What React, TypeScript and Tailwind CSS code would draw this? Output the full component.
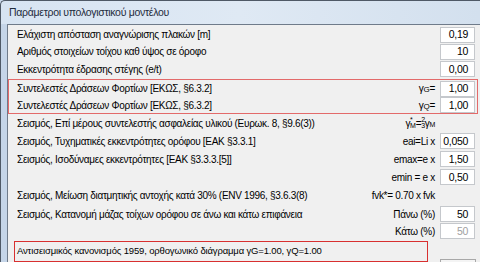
import React from "react";

const font = { fontFamily: '"Liberation Sans", "DejaVu Sans", sans-serif' };

function Box({ v, disabled }: { v: string; disabled?: boolean }) {
  return (
    <div
      className={
        disabled
          ? "w-[35px] h-[16px] bg-white border border-[#c5c8cc] flex items-center justify-end pr-[6px] text-[10.5px] leading-none text-[#a0a0a0]"
          : "w-[35px] h-[16px] bg-white border border-[#c5c8cc] flex items-center justify-end pr-[6px] text-[10.5px] leading-none text-black"
      }
    >
      {v}
    </div>
  );
}

function Row({
  label,
  right,
  v,
  tall,
  disabled,
}: {
  label?: React.ReactNode;
  right?: React.ReactNode;
  v?: string;
  tall: number;
  disabled?: boolean;
}) {
  return (
    <div className="grid grid-cols-[minmax(0,1fr)_auto_35px] items-center" style={{ height: tall }}>
      <div className="whitespace-nowrap overflow-hidden">{label}</div>
      <div className="whitespace-nowrap pr-[5px]">{right}</div>
      <div>{v !== undefined && <Box v={v} disabled={disabled} />}</div>
    </div>
  );
}

export default function App() {
  return (
    <div
      className="w-[480px] h-[262px] overflow-hidden bg-[#c9d8ea] text-[10px] tracking-[-0.3px] text-black relative"
      style={font}
    >
      {/* title bar */}
      <div className="h-[24px] border-t border-l border-[#4f5966] rounded-tl-[5px] bg-gradient-to-r from-[#d7e4f2] via-[#dfe9f4] to-[#d3e0ee] flex items-center pl-[8px] text-[10.5px] tracking-[-0.3px] text-[#1e2b3c]">
        Παράμετροι υπολογιστικού μοντέλου
      </div>
      <div className="grid grid-cols-[7px_minmax(0,1fr)] h-[238px]">
        <div className="bg-[#c5d5e8] border-l border-[#4f5966]" />
        <div className="bg-[#f0f0f0] border-l border-t border-[#6f7b8a] pl-[9px] pr-[5px] pt-[1px]">
          <Row tall={17} label="Ελάχιστη απόσταση αναγνώρισης πλακών [m]" v="0,19" />
          <Row tall={17} label="Αριθμός  στοιχείων τοίχου καθ ύψος σε όροφο" v="10" />
          <Row tall={18} label="Εκκεντρότητα έδρασης στέγης (e/t)" v="0,00" />
          <div className="ml-[-9px] mr-[-3px] mt-[1px] border border-[#e36a6a] pl-[8px] pr-[2px]">
            <Row
              tall={17}
              label="Συντελεστές Δράσεων Φορτίων [ΕΚΩΣ, §6.3.2]"
              right={<span>γ<span className="text-[8px]">G</span>=</span>}
              v="1,00"
            />
            <Row
              tall={16}
              label="Συντελεστές Δράσεων Φορτίων [ΕΚΩΣ, §6.3.2]"
              right={<span>γ<span className="text-[8px]">Q</span>=</span>}
              v="1,00"
            />
          </div>
          <Row
            tall={18}
            label="Σεισμός, Επί μέρους συντελεστής ασφαλείας υλικού (Ευρωκ. 8, §9.6(3))"
            right={
              <span className="inline-flex items-center">
                γ
                <span className="inline-flex flex-col text-[7px] leading-[6px] -mt-[1px]">
                  <span>*</span>
                  <span>M</span>
                </span>
                =
                <span className="inline-flex flex-col text-[7px] leading-[6px]">
                  <span>2</span>
                  <span>3</span>
                </span>
                γ<span className="text-[7px] self-end">M</span>
              </span>
            }
          />
          <Row tall={18} label="Σεισμός, Τυχηματικές εκκεντρότητες ορόφου [ΕΑΚ §3.3.1]" right="eai=Li  x" v="0,050" />
          <Row tall={18} label="Σεισμός, Ισοδύναμες εκκεντρότητες [ΕΑΚ §3.3.3.[5]]" right="emax=e  x" v="1,50" />
          <Row tall={18} right="emin = e  x" v="0,50" />
          <Row
            tall={19}
            label="Σεισμός, Μείωση διατμητικής αντοχής κατά 30% (ENV 1996, §3.6.3(8)"
            right="fvk*= 0.70 x fvk"
          />
          <Row tall={18} label="Σεισμός, Κατανομή μάζας τοίχων ορόφου σε άνω και κάτω επιφάνεια" right="Πάνω (%)" v="50" />
          <Row tall={16} right="Κάτω (%)" v="50" disabled />
          <div className="grid grid-cols-[414px_1fr] mt-[2px] ml-[-3px]">
            <div className="h-[21px] border border-[#d83030] flex items-center pl-[2px] text-[9.5px] tracking-[-0.15px]">
              Αντισεισμικός κανονισμός 1959, ορθογωνικό διάγραμμα γG=1.00, γQ=1.00
            </div>
            <div className="ml-[12px] mt-[18px] w-[36px] h-[4px] border-t border-x border-[#a8a8a8] bg-[#f4f4f4]" />
          </div>
        </div>
      </div>
    </div>
  );
}
